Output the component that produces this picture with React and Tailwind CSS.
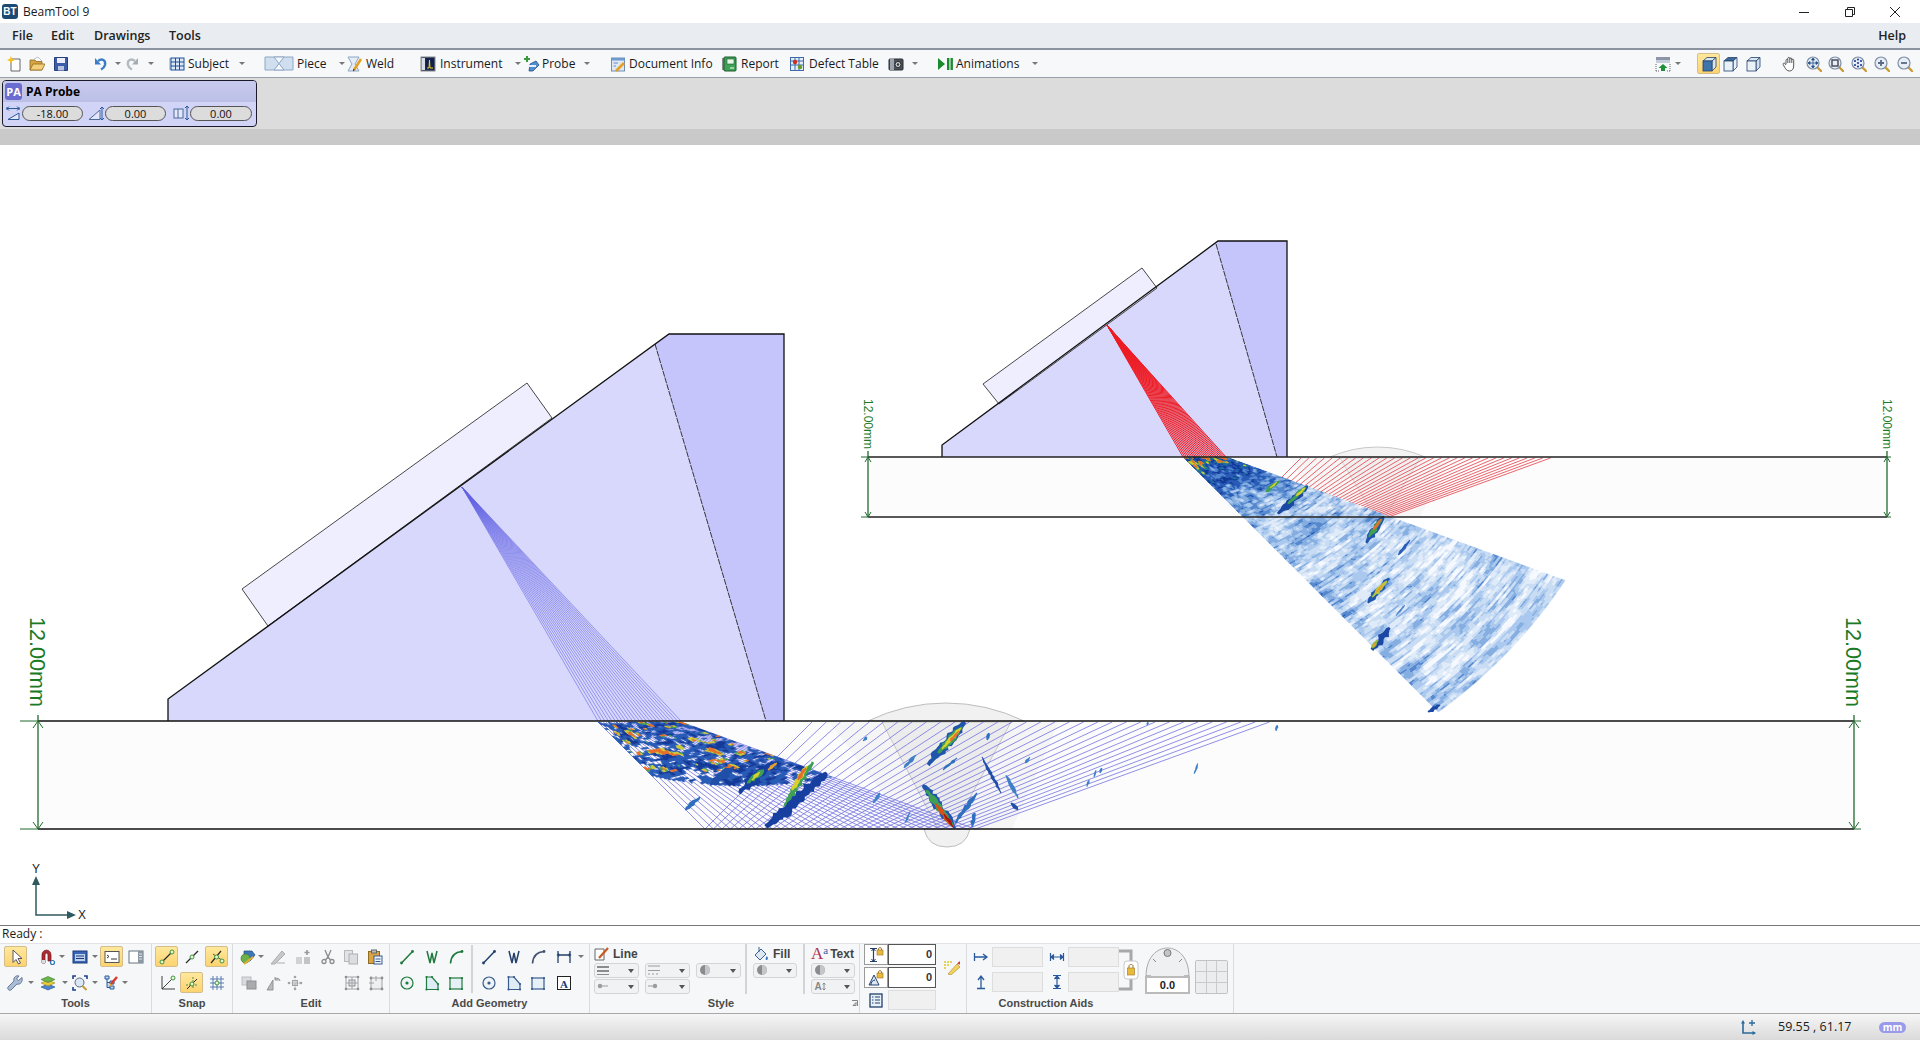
import React from 'react';

// ---------- small seeded noise for the ultrasonic scan pictures ----------
function mulberry(a) {
  return () => {
    a |= 0;
    a = (a + 0x6d2b79f5) | 0;
    let t = Math.imul(a ^ (a >>> 15), 1 | a);
    t = (t + Math.imul(t ^ (t >>> 7), 61 | t)) ^ t;
    return ((t ^ (t >>> 14)) >>> 0) / 4294967296;
  };
}

function makeNoise(seed) {
  const r = mulberry(seed);
  const g = Array.from({ length: 65536 }, () => r());
  const at = (x, y) => g[((x & 255) << 8) | (y & 255)];
  const s = (v) => v * v * (3 - 2 * v);
  return (x, y) => {
    const x0 = Math.floor(x);
    const y0 = Math.floor(y);
    const fx = s(x - x0);
    const fy = s(y - y0);
    const a = at(x0, y0) * (1 - fx) + at(x0 + 1, y0) * fx;
    const b = at(x0, y0 + 1) * (1 - fx) + at(x0 + 1, y0 + 1) * fx;
    return a * (1 - fy) + b * fy;
  };
}

const LEVELS = [
  [0.06, '#f6f9fe'], [0.12, '#e0ebf9'], [0.18, '#c8dcf4'], [0.25, '#abc9ee'],
  [0.33, '#86aee2'], [0.42, '#5589cf'], [0.55, '#2a5cb6'], [0.72, '#143a9a'],
  [0.8, '#1d6fa0'], [0.88, '#3f9f55'], [0.95, '#cfcb34'], [9, '#e8702a'],
];
const colorOf = (a) => LEVELS.find((l) => a < l[0])[1];

// polar cells of a sector, merged into one path per colour
function sector({ e0, e1, y0, rMax, beams, stepR, amp, clipY }) {
  const out = {};
  const pt = (r, t) => {
    const th = (Math.PI / 180) * (45 + 25 * t);
    return [e0 + (e1 - e0) * t + r * Math.sin(th), y0 + r * Math.cos(th)];
  };
  for (let j = 0; j < beams; j++) {
    const t = j / beams;
    const t2 = (j + 1) / beams;
    const max = rMax(t);
    for (let r = 0; r < max; r += stepR) {
      const a = amp(r, t);
      if (a === null) continue;
      const [p1, p2, p3, p4] = [pt(r, t), pt(r + stepR, t), pt(r + stepR, t2), pt(r, t2)];
      if (clipY && p2[1] > clipY) continue;
      const c = colorOf(a);
      out[c] = (out[c] || '') +
        `M${p1[0].toFixed(1)} ${p1[1].toFixed(1)}L${p2[0].toFixed(1)} ${p2[1].toFixed(1)}L${p3[0].toFixed(1)} ${p3[1].toFixed(1)}L${p4[0].toFixed(1)} ${p4[1].toFixed(1)}Z`;
    }
  }
  return Object.entries(out);
}

const nA = makeNoise(11);
const nB = makeNoise(23);
const nC = makeNoise(37);

const smallScan = sector({
  e0: 1183, e1: 1226, y0: 457, beams: 140, stepR: 2.2, rMax: () => 360,
  amp: (r, t) => {
    const n = nA(r / 2.4, t * 9) * 0.5 + nB(r / 9, t * 4) * 0.35 + nC(r / 1.4, t * 28) * 0.3;
    let a = Math.max(0, (n - 0.3) * 0.56);
    a += Math.exp(-r / 50) * 0.95 * (0.35 + 0.75 * nC(r / 4, t * 16));
    if (t < 0.1) a += 0.1 * nB(r / 5, 3);
    return Math.min(a, 0.97);
  },
});

const bigScan = sector({
  e0: 598, e1: 681, y0: 722, beams: 84, stepR: 2.2, clipY: 829,
  rMax: (t) => 76 + 84 * t,
  amp: (r, t) => {
    const n = nA(r / 3 + 50, t * 24) * 0.75 + nB(r / 9 + 7, t * 6) * 0.4;
    if (n < 0.48) return null;
    const hot = nC(r / 5, t * 14);
    return 0.46 + (n - 0.48) * 0.35 + (hot > 0.74 && r < 70 + 40 * t ? 0.38 : 0) + (hot > 0.84 ? 0.12 : 0);
  },
});

// jagged blotch along a line, layered dark to hot
const rnd = mulberry(77);
function blotch(x1, y1, x2, y2, w) {
  const L = Math.hypot(x2 - x1, y2 - y1) || 1;
  const nx = -(y2 - y1) / L;
  const ny = (x2 - x1) / L;
  const n = Math.max(3, Math.round(L / 2.5));
  const a = [];
  const b = [];
  for (let i = 0; i <= n; i++) {
    const t = i / n;
    const taper = Math.min(1, 0.35 + 2.4 * Math.min(t, 1 - t));
    const wa = (w / 2) * taper * (0.5 + rnd());
    const wb = (w / 2) * taper * (0.5 + rnd());
    const x = x1 + (x2 - x1) * t;
    const y = y1 + (y2 - y1) * t;
    a.push(`${(x + nx * wa).toFixed(1)} ${(y + ny * wa).toFixed(1)}`);
    b.unshift(`${(x - nx * wb).toFixed(1)} ${(y - ny * wb).toFixed(1)}`);
  }
  return 'M' + a.concat(b).join('L') + 'Z';
}

const BLOTCHES = [
  // big plate
  [827, 773, 766, 827, 11, '#173f9f'], [773, 762, 739, 793, 9, '#173f9f'], [734, 767, 710, 785, 8, '#1f4fa8'],
  [700, 797, 685, 810, 4, '#2f6fc0'], [965, 722, 928, 765, 9, '#1f55ab'], [957, 758, 943, 770, 3, '#2f6fc0'],
  [923, 785, 955, 828, 8, '#1f55ab'], [977, 793, 955, 823, 4, '#2f6fc0'], [982, 757, 1001, 793, 3, '#1f4fa8'],
  [1006, 775, 1018, 798, 3, '#3f7fc8'], [1011, 803, 1018, 810, 3, '#1f4fa8'], [975, 813, 972, 827, 5, '#2f6fc0'],
  [867, 737, 863, 741, 3, '#3f7fc8'], [880, 793, 873, 803, 3, '#3f7fc8'], [910, 812, 905, 823, 2, '#3f7fc8'],
  [1030, 757, 1025, 763, 3, '#3f7fc8'], [989, 733, 987, 740, 3, '#2f6fc0'], [916, 755, 904, 768, 3, '#3f7fc8'],
  [1277, 725, 1276, 731, 3, '#3f7fc8'], [1198, 763, 1194, 774, 2, '#3f7fc8'], [1102, 768, 1100, 773, 2, '#3f7fc8'],
  [1096, 770, 1094, 777, 2, '#3f7fc8'], [1089, 780, 1087, 787, 2, '#3f7fc8'], [1148, 722, 1147, 725, 2, '#3f7fc8'],
  [813, 762, 784, 806, 6, '#3f9f55'], [807, 766, 792, 790, 5, '#d8cf30'], [806, 768, 798, 780, 3.5, '#e2702a'],
  [764, 770, 747, 783, 5, '#3f9f55'], [760, 772, 752, 780, 3, '#d8cf30'],
  [777, 763, 768, 770, 3, '#e8a030'],
  [962, 727, 938, 753, 6, '#3f9f55'], [961, 728, 942, 749, 4, '#d8cf30'], [959, 731, 950, 741, 2.5, '#e8702a'],
  [926, 790, 953, 826, 6, '#3f9f55'], [935, 803, 953, 827, 4, '#d8501c'], [944, 814, 953, 827, 2.5, '#a01810'],
  // small plate
  [1384, 516, 1366, 543, 6, '#1f55ab'], [1382, 519, 1369, 537, 4, '#3f9f55'], [1381, 519, 1373, 530, 2.5, '#e2702a'],
  [1389, 578, 1368, 603, 6, '#1f55ab'], [1387, 581, 1372, 597, 4, '#b8c83a'], [1383, 585, 1376, 592, 2.5, '#e8a030'],
  [1390, 628, 1372, 650, 7, '#1a48a4'], [1378, 640, 1372, 648, 4, '#8fb83a'], [1375, 643, 1373, 647, 2, '#e8a030'],
  [1308, 486, 1278, 514, 6, '#1a48a4'], [1306, 487, 1288, 504, 4, '#3f9f55'], [1305, 488, 1296, 496, 2.5, '#d8cf30'],
  [1279, 481, 1266, 492, 4, '#3f9f55'], [1277, 482, 1270, 488, 2, '#d8cf30'],
  [1410, 540, 1398, 555, 3, '#2a5cb6'], [1405, 605, 1396, 616, 2, '#5589cf'], [1440, 705, 1428, 712, 4, '#1a48a4'],
].map(([x1, y1, x2, y2, w, c]) => ({ d: blotch(x1, y1, x2, y2, w), c }));

// incident leg plus the skip leg; tangent steps evenly so the spacing stays even
function beamLines(e0, e1, top, depth, first, n = 32) {
  let d = '';
  for (let i = 0; i <= n; i++) {
    const t = i / n;
    const k = 1 + 1.75 * t;
    const e = e0 + (e1 - e0) * t;
    const bx = (e + k * depth).toFixed(1);
    d += first ? `M${e.toFixed(1)} ${top}L${bx} ${top + depth}` : `M${bx} ${top + depth}`;
    d += `L${(e + 2 * k * depth).toFixed(1)} ${top}`;
  }
  return d;
}

function fanLines(ax, ay, e0, e1, y, n) {
  let d = '';
  for (let i = 0; i <= n; i++) d += `M${ax} ${ay}L${(e0 + ((e1 - e0) * i) / n).toFixed(1)} ${y}`;
  return d;
}

// ---------- canvas ----------
function Dim({ x, top, bottom, tx, ty, size, tickFrom, tickTo }) {
  const a = size > 15 ? 5 : 3;
  return (
    <g stroke="#1f6b2d" fill="none" strokeWidth="1">
      <path d={`M${tickFrom} ${top}H${tickTo}M${tickFrom} ${bottom}H${tickTo}`} />
      <path d={`M${x} ${top - 6}V${bottom}`} strokeWidth="1.3" />
      <path d={`M${x - a} ${top + a + 2}L${x} ${top}L${x + a} ${top + a + 2}M${x - a} ${bottom - a - 2}L${x} ${bottom}L${x + a} ${bottom - a - 2}`} />
      <text
        x={tx}
        y={ty}
        stroke="none"
        fill="#1b7a25"
        fontFamily="'Liberation Sans', sans-serif"
        fontSize={size}
        textAnchor="middle"
        dominantBaseline="central"
        transform={`rotate(90 ${tx} ${ty})`}
      >
        12.00mm
      </text>
    </g>
  );
}

function Canvas() {
  return (
    <div className="h-[780px] bg-white flex-none">
      <svg className="block w-full h-full" viewBox="0 145 1920 780">
        {/* big plate */}
        <rect x="38" y="721" width="1816" height="108" fill="#fcfcfc" />
        <path d="M829 722H1059L1012 829H910Z" fill="#f5f5f5" />
        <path d="M868 721A178 178 0 0 1 1024 721Z" fill="#f1f1f1" stroke="#bdbdbd" />
        <path d="M924 829H970Q966 847 947 847Q928 847 924 829Z" fill="#f1f1f1" stroke="#bdbdbd" />
        <path d="M882 722H1011L953 829H938Z" fill="#ececec" stroke="#bdbdbd" strokeWidth=".8" />
        <path d={beamLines(598, 681, 722, 107, true)} fill="none" stroke="#7272e2" strokeWidth=".8" />
        <path d="M168 721V699L669 334H784V721Z" fill="#d8d8fc" />
        <path d="M655 344L669 334H784V721H766Z" fill="#c5c5fb" />
        <path d="M242 589L527 383L552 418L268 626Z" fill="#eeeeff" stroke="#333" strokeWidth=".9" />
        <path d="M655 344L766 721" stroke="#222" strokeWidth=".9" fill="none" strokeDasharray="6 1" />
        <path d={fanLines(462, 487, 598, 681, 721, 24)} stroke="#6464e4" strokeWidth=".6" fill="none" />
        <path d="M168 721V699L669 334H784V721" fill="none" stroke="#111" strokeWidth="1.3" />
        {bigScan.map(([c, d]) => (
          <path key={c} d={d} fill={c} stroke={c} strokeWidth=".3" />
        ))}
        {/* small plate */}
        <rect x="868" y="457" width="1019" height="60" fill="#fcfcfc" />
        <path d="M1290 458H1450L1420 517H1325Z" fill="#f6f6f6" />
        <path d="M1330 457A118 118 0 0 1 1425 457Z" fill="#f3f3f3" stroke="#c8c8c8" />
        <path d="M1340 458H1420L1385 517H1375Z" fill="#f0f0f0" stroke="#cfcfcf" strokeWidth=".7" />
        <path d={beamLines(1183, 1226, 458, 59, false)} fill="none" stroke="#e8545c" strokeWidth=".9" />
        <path d="M942 457V445L1218 241H1287V457Z" fill="#d8d8fc" />
        <path d="M1216 244L1218 241H1287V457H1277Z" fill="#c5c5fb" />
        <path d="M983 384L1142 268L1157 288L999 404Z" fill="#eeeeff" stroke="#333" strokeWidth=".9" />
        <path d="M1216 244L1277 457" stroke="#222" strokeWidth=".9" fill="none" strokeDasharray="6 1" />
        <path d={fanLines(1107, 325, 1183, 1226, 457, 24)} stroke="#ee1c24" strokeWidth="1" fill="none" />
        <path d="M942 457V445L1218 241H1287V457" fill="none" stroke="#111" strokeWidth="1.3" />
        {smallScan.map(([c, d]) => (
          <path key={c} d={d} fill={c} stroke={c} strokeWidth=".3" />
        ))}
        {BLOTCHES.map((b, i) => (
          <path key={i} d={b.d} fill={b.c} />
        ))}
        {/* plate outlines */}
        <path d="M38 721H1854M38 829H1854" stroke="#111" strokeWidth="1.4" />
        <path d="M868 457H1887M868 517H1887" stroke="#222" strokeWidth="1.6" />
        <Dim x={38} top={721} bottom={829} tx={37} ty={662} size={21.6} tickFrom={20} tickTo={38} />
        <Dim x={1854} top={721} bottom={829} tx={1853} ty={662} size={21.6} tickFrom={1854} tickTo={1861} />
        <Dim x={868} top={457} bottom={517} tx={868} ty={424} size={12} tickFrom={861} tickTo={868} />
        <Dim x={1887} top={457} bottom={517} tx={1887} ty={424} size={12} tickFrom={1887} tickTo={1891} />
        {/* axes */}
        <path d="M36 882V915H68" fill="none" stroke="#2f5a5f" strokeWidth="1.5" />
        <path d="M36 876L40 885H32ZM76 915L67 919V911Z" fill="#2f5a5f" />
        <text x="36" y="873" fontSize="12" textAnchor="middle" fontFamily="'Liberation Sans', sans-serif" fill="#222">Y</text>
        <text x="82" y="919" fontSize="12" textAnchor="middle" fontFamily="'Liberation Sans', sans-serif" fill="#222">X</text>
      </svg>
    </div>
  );
}

// ---------- icons ----------
const G = '#1f7a3e';
const N = '#23406b';
const dots = (pts, c, r = 1.4) => pts.map(([x, y], i) => <circle key={i} cx={x} cy={y} r={r} fill={c} />);
const mag = (inner) => (
  <>
    <path d="M10.5 10.5L15 15" stroke="#c89a30" strokeWidth="2.4" strokeLinecap="round" />
    <circle cx="7" cy="7" r="6" fill="#e8eef6" stroke="#7f8ea4" strokeWidth="1.2" />
    {inner}
  </>
);
const ln = (c) => (
  <>
    <path d="M2.5 14L13.5 2.5" stroke={c} strokeWidth="1.5" />
    {dots([[2.5, 14], [13.5, 2.5]], c)}
  </>
);
const zig = (c) => <path d="M3 2L6 14L8 4L10 14L13 2" stroke={c} strokeWidth="1.5" fill="none" />;
const arc = (c) => (
  <>
    <path d="M2.5 14.5C3 7 7 3 14 2.5" stroke={c} strokeWidth="1.6" fill="none" />
    {dots([[14, 2.5]], c)}
  </>
);
const circ = (c) => (
  <>
    <circle cx="8" cy="8" r="6" fill="#eef3f5" stroke={c} strokeWidth="1.2" />
    <circle cx="8" cy="8" r="1.6" fill={c} />
  </>
);
const poly = (c) => (
  <>
    <path d="M2.5 2V14.5H14V9L8 2Z" fill="#dfecf6" stroke={c} strokeWidth="1.2" />
    {dots([[2.5, 2], [2.5, 14.5], [14, 14.5], [14, 9], [8, 2]], c, 1.1)}
  </>
);
const rct = (c) => (
  <>
    <rect x="2" y="3" width="12" height="11" fill="#e6f0f7" stroke={c} strokeWidth="1.2" />
    {dots([[2, 3], [14, 3], [2, 14], [14, 14]], c, 1.1)}
  </>
);
const snapDot = (x, y) => <circle cx={x} cy={y} r="2" fill="#e9f7c8" stroke="#2c8a3c" strokeWidth=".9" />;
const cube = (front, top, side) => (
  <>
    <path d="M2 5L6 1.5H15L11 5Z" fill={top} stroke={N} strokeWidth=".8" />
    <path d="M11 5L15 1.5V11L11 15Z" fill={side} stroke={N} strokeWidth=".8" />
    <rect x="2" y="5" width="9" height="10" fill={front} stroke={N} strokeWidth=".8" />
  </>
);

const ICONS = {
  new: <><path d="M5 3H13V15H4V5Z" fill="#fff" stroke="#555" strokeWidth=".9" /><path d="M4 0L5.2 2.8L8 4L5.2 5.2L4 8L2.8 5.2L0 4L2.8 2.8Z" fill="#f6c11c" /></>,
  open: <><path d="M1 4H6L7 5.5H13V14H1Z" fill="#d9a441" stroke="#8f6a20" strokeWidth=".8" /><path d="M5 3L9 1L13 5" fill="#fff" stroke="#999" strokeWidth=".6" /><path d="M1 14L4 8H16L13 14Z" fill="#f3cf7a" stroke="#8f6a20" strokeWidth=".8" /></>,
  save: <><path d="M1.5 1.5H14.5V14.5H1.5Z" fill="#3c5da8" stroke="#26407e" /><rect x="4" y="2" width="8" height="5" fill="#eef" /><rect x="5" y="10" width="6" height="4.5" fill="#b8c4e0" /></>,
  undo: <><path d="M5 5C9 2 13 4 12 9C11.5 11 10 12.5 8 13.5" stroke="#3a7cc6" strokeWidth="2.4" fill="none" /><path d="M2 2V8.5H8Z" fill="#3a7cc6" /></>,
  redo: <><path d="M11 5C7 2 3 4 4 9C4.5 11 6 12.5 8 13.5" stroke="#b4b9bd" strokeWidth="2.4" fill="none" /><path d="M14 2V8.5H8Z" fill="#a6abb0" /></>,
  subject: <><rect x="2" y="2" width="13" height="12" fill="#dbe8f8" stroke="#1e4f95" /><path d="M6.5 2V14M10.5 2V14M2 6H15M2 10H15" stroke="#1e4f95" /><path d="M1 2.5V14" stroke="#1e4f95" strokeDasharray="1 1" /></>,
  piece: <><path d="M1 1H29V14H1Z" fill="#cfdff0" stroke="#8ea6c4" /><path d="M10 1L15 7.5L10 14H20L15 7.5L20 1Z" fill="#f4f7fb" stroke="#8ea6c4" /></>,
  weld: <><path d="M1 1H12L8 8L12 15H1L5 8Z" fill="#e4ecf6" stroke="#8ea6c4" /><path d="M7 14L14 3" stroke="#e4a020" strokeWidth="2.6" /><path d="M6.5 15L7 13" stroke="#333" strokeWidth="1.2" /></>,
  inst: <><rect x="1" y="1" width="14" height="14" fill="#1a2a55" stroke="#888" /><rect x="1.5" y="2" width="3.5" height="12" fill="#d8dde5" /><rect x="6" y="2.5" width="8" height="10.5" fill="#10204c" /><path d="M7 12L9 12L9.5 4L10 12H13" stroke="#f2d230" fill="none" /></>,
  probe: <><path d="M3 0V6M0 3H6" stroke="#3c9a3c" strokeWidth="2" /><path d="M6 8L12 5L15 9L9 15H5Z" fill="#4f8fd0" stroke="#254f86" strokeWidth=".8" /><rect x="4" y="9" width="8" height="2" fill="#eef" /></>,
  doc: <><rect x="1.5" y="2" width="13" height="13" fill="#dfe9f6" stroke="#6f8cb3" /><rect x="1.5" y="2" width="13" height="2.5" fill="#6f9ad0" /><path d="M3.5 7H8M3.5 10H6" stroke="#6f8cb3" /><path d="M6 15L14 7" stroke="#e4a020" strokeWidth="2.6" /></>,
  report: <><rect x="2" y="1" width="12" height="14" rx="1" fill="#3fa256" stroke="#1a5c2c" /><rect x="5" y="3" width="7" height="5" fill="#e8f6ea" stroke="#1a5c2c" strokeWidth=".6" /><path d="M8 12H12" stroke="#fff" /><path d="M1 2.5V14" stroke="#222" strokeDasharray="1 1" strokeWidth="2" /></>,
  defect: <><rect x="1.5" y="1.5" width="13" height="13" fill="#e4edf8" stroke="#3f6aa8" /><path d="M1.5 5H14.5M1.5 9H14.5M6 1.5V14.5M10 1.5V14.5" stroke="#3f6aa8" /><circle cx="6" cy="6" r="2.2" fill="#c8321c" /><circle cx="11" cy="11" r="2.2" fill="#6a9a2a" /></>,
  camera: <><rect x="1" y="3" width="14" height="11" rx="1" fill="#4a5058" stroke="#2a2e33" /><rect x="2" y="2" width="4" height="12" fill="#9da4ad" /><circle cx="10" cy="8.5" r="3" fill="#d8dde2" stroke="#222" /><circle cx="10" cy="8.5" r="1.3" fill="#333" /></>,
  anim: <><path d="M1 2L8 8L1 14Z" fill="#1a8a2e" /><rect x="10" y="2" width="2.4" height="12" fill="#1a8a2e" /><rect x="13.5" y="2" width="2.4" height="12" fill="#1a8a2e" /></>,
  layout: <><rect x="1" y="1" width="14" height="3" fill="#8c96a8" /><rect x="1" y="4" width="14" height="3" fill="#c6cedb" /><path d="M8 8L12.5 12H10V15H6V12H3.5Z" fill="#1f8f3a" /><path d="M1 8V15M15 8V15M1 15H4M12 15H15" stroke="#666" strokeDasharray="1 1" /></>,
  cube1: cube('#3f74ad', '#d7e6f3', '#d7e6f3'),
  cube2: cube('#e8f1f8', '#3f6a9a', '#e8f1f8'),
  cube3: cube('#eaf2f8', '#dbe8f2', '#cfe0ee'),
  hand: <path d="M4 8V4.5C4 3 5.7 3 5.8 4.5V7M5.8 4V2.5C5.8 1 7.7 1 7.8 2.5V7M7.8 3C7.8 1.6 9.8 1.6 9.8 3V7M9.8 4C9.8 2.8 11.7 2.8 11.7 4.2V10C11.7 13 10 15 7.5 15C5 15 3.8 13.2 2.8 11.5L1.2 8.5C.7 7.3 2.2 6.5 3 7.6L4 9" fill="#fff" stroke="#444" strokeWidth=".9" />,
  panzoom: mag(<path d="M7 2.5V11.5M2.5 7H11.5M7 2L5.5 4H8.5ZM7 12L5.5 10H8.5ZM2 7L4 5.5V8.5ZM12 7L10 5.5V8.5Z" stroke="#23508c" fill="#23508c" strokeWidth=".8" />),
  zoombox: mag(<rect x="4" y="4" width="6" height="6" fill="none" stroke="#445" strokeWidth="1.4" />),
  zoomdots: mag(dots([[4, 5], [7, 3.5], [10, 5], [4, 9], [10, 9], [7, 10.5], [7, 7]], '#1e3f9c', 1.1)),
  zoomin: mag(<path d="M7 4V10M4 7H10" stroke="#5a6a86" strokeWidth="1.8" />),
  zoomout: mag(<path d="M4 7H10" stroke="#5a6a86" strokeWidth="1.8" />),
  cursor: <path d="M5 1V13.5L8 10.5L10.5 15L12.5 14L10 9.5H14Z" fill="#fff" stroke="#556" strokeWidth="1" />,
  magnet: <><path d="M2 14V6C2 -.5 11 -.5 11 6V12H8V6C8 3.5 5 3.5 5 6V14Z" fill="#b02a30" stroke="#6e1418" strokeWidth=".7" /><rect x="2" y="11" width="3" height="3" fill="#ddd" /><circle cx="12.5" cy="13.5" r="2" fill="#fff" stroke="#2a70b8" strokeWidth="1.2" /></>,
  window: <><rect x="1" y="2" width="14" height="12" fill="#3a64b4" stroke="#1d3a78" /><rect x="3" y="5" width="10" height="7" fill="#bcd0ee" /><path d="M4 7H12M4 9.5H12" stroke="#1d3a78" /></>,
  console: <><rect x="1" y="2.5" width="14" height="11" fill="#fff" stroke="#555" /><path d="M3 6L5 7.5L3 9M7 10H13" stroke="#333" fill="none" /></>,
  panel: <><rect x="1" y="2" width="14" height="12" fill="#fff" stroke="#67727f" /><rect x="10" y="2" width="5" height="12" fill="#8c97a3" /><path d="M11 5H14M11 7.5H14M11 10H14" stroke="#dfe4e8" /></>,
  wrench: <path d="M15 2.5L11.5 5.5L9.5 4L12 1C8.5 0 6 3 7 6L1 12C0 14 2 16 4 15L10 9C13 10 16 7 15 2.5Z" fill="#a9bdd6" stroke="#5b6f8e" strokeWidth=".9" />,
  layers: <><path d="M1 12L8 9L15 12L8 15Z" fill="#4c82cf" stroke="#2b548f" strokeWidth=".6" /><path d="M1 8L8 5L15 8L8 11Z" fill="#e8c838" stroke="#9a8a20" strokeWidth=".6" /><path d="M1 4.5L8 1.5L15 4.5L8 7.5Z" fill="#6cb44c" stroke="#3e7a2a" strokeWidth=".6" /></>,
  zoomrect: <><path d="M1 4V1H4M12 1H15V4M1 12V15H4" stroke="#1c3f8e" strokeWidth="1.6" fill="none" /><circle cx="7.5" cy="7.5" r="4.5" fill="#dbe8f3" stroke="#5c6a80" /><path d="M10.5 11L14.5 15" stroke="#c89a30" strokeWidth="2" /></>,
  listedit: <><path d="M2 1H6V4H2ZM7 6H11V9H7ZM7 11H11V14H7ZM4 4V12.5H7M4 7.5H7" stroke="#2a5a9c" fill="#bcd3ee" /><path d="M8 9L14 2" stroke="#d83a2a" strokeWidth="2.4" /><path d="M7 11L8 9" stroke="#e4a020" strokeWidth="2" /></>,
  s1: <><path d="M3 13L13 3" stroke="#2b2b2b" strokeWidth="1.2" />{snapDot(3, 13)}{snapDot(13, 3)}</>,
  s2: <><path d="M2 14L14 2" stroke="#2b2b2b" strokeWidth="1.2" />{snapDot(8, 8)}</>,
  s3: <><path d="M2 14L12 2" stroke="#2b2b2b" strokeWidth="1.2" /><path d="M4 5L14 12" stroke="#2b2b2b" strokeWidth=".8" />{snapDot(7.5, 8)}{snapDot(13, 12)}</>,
  s4: <><path d="M2 1V14H15M2 14L12 4" stroke="#2b2b2b" strokeWidth=".9" fill="none" />{snapDot(13, 3)}</>,
  s5: <><path d="M2 10H14M9 2V14" stroke="#3f8a3c" strokeWidth=".9" strokeDasharray="2 1" /><path d="M3 14L13 4" stroke="#2b2b2b" />{snapDot(8, 9)}</>,
  s6: <><path d="M4 1V15M8 1V15M12 1V15M1 4H15M1 8H15M1 12H15" stroke="#4a6ea8" strokeWidth=".9" />{snapDot(8, 8)}</>,
  e1: <><path d="M4 2H12L15 6L10 12H4Z" fill="#3d76b8" stroke="#274f80" strokeWidth=".7" /><circle cx="5.5" cy="9.5" r="4.5" fill="#6cb04a" stroke="#3c7a28" strokeWidth=".7" /><path d="M4 15L13 8" stroke="#e0b030" strokeWidth="2" /></>,
  e2: <path d="M1 15L12 2L15 5L5 15ZM7 14H15" fill="#c6c8cc" stroke="#a5a8ac" strokeWidth=".9" />,
  e3: <><rect x="1" y="8" width="6" height="7" fill="#d0d2d6" /><rect x="9" y="8" width="6" height="7" fill="#c2c4c8" /><path d="M12 1V6M9.5 3.5H14.5" stroke="#999" strokeWidth="1.6" /></>,
  e4: <path d="M5 1L8 8L11 1M4 14.5A2 2 0 1 0 4 10.5A2 2 0 1 0 4 14.5ZM12 14.5A2 2 0 1 0 12 10.5A2 2 0 1 0 12 14.5ZM8 8L5.5 11M8 8L10.5 11" stroke="#8a8c90" strokeWidth="1.3" fill="none" />,
  e5: <><rect x="1.5" y="1.5" width="8" height="11" fill="#e2e3e6" stroke="#b7b9bd" /><rect x="6" y="5" width="8.5" height="10" fill="#dcdde0" stroke="#aeb0b4" /></>,
  e6: <><rect x="1.5" y="2.5" width="11" height="12" fill="#d9a441" stroke="#8f6a20" /><rect x="4.5" y="1" width="5" height="3" fill="#bbb" stroke="#666" /><rect x="7" y="7" width="8" height="8" fill="#f0f4fa" stroke="#3a5a8c" /><path d="M8.5 10H13.5M8.5 12.5H13.5" stroke="#3a5a8c" /></>,
  e7: <><rect x="1" y="2" width="9" height="8" fill="#dadbde" stroke="#bcbec2" /><rect x="6" y="6" width="9" height="8" fill="#a9abaf" stroke="#8d8f93" /></>,
  e8: <path d="M1 15L7 5V15ZM9 4A3 3 0 0 1 14 6M9 2V5H12" fill="#b8babe" stroke="#8a8c90" strokeWidth=".9" />,
  e9: <><rect x="5.5" y="5.5" width="5" height="5" fill="#d8d9dc" stroke="#a0a2a6" /><path d="M8 1V15M1 8H15" stroke="#b0b2b6" strokeDasharray="2 1.5" />{dots([[8, 2], [8, 14], [2, 8], [14, 8]], '#a2a4a8', 1.3)}</>,
  e10: <><rect x="2" y="2" width="12" height="12" fill="none" stroke="#a0a2a6" /><rect x="5" y="5" width="6" height="6" fill="#e4e5e8" stroke="#8d8f93" /><path d="M8 2V14M2 8H14" stroke="#a0a2a6" />{dots([[2, 2], [14, 2], [2, 14], [14, 14]], '#8d8f93', 1.3)}</>,
  e11: <><rect x="3" y="3" width="11" height="11" fill="#eeeff1" stroke="#a0a2a6" /><path d="M8 1V6M1 8H6" stroke="#a0a2a6" />{dots([[3, 3], [14, 3], [3, 14], [14, 14]], '#8d8f93', 1.4)}</>,
  g1: ln(G), g2: zig(G), g3: arc(G), g4: circ(G), g5: poly(G), g6: rct(G),
  d1: ln(N), d2: zig(N), d3: arc('#42536e'), d4: <><path d="M2 2V14M14 2V14M2 6H14M3 4.5L1.5 6L3 7.5M13 4.5L14.5 6L13 7.5" stroke={N} strokeWidth="1.3" fill="none" /></>,
  d5: circ('#3a5a8c'), d6: poly('#3a5a8c'), d7: rct('#3a5a8c'),
  d8: <><rect x="1.5" y="1.5" width="13" height="13" fill="#fff" stroke="#222" /><text x="8" y="12.5" fontSize="11" fontWeight="700" fontFamily="'Liberation Serif', serif" textAnchor="middle" fill="#1d3a78">A</text></>,
  pencilLine: <><path d="M1 3H10V14H1Z" fill="#fff" stroke="#666" /><path d="M5 12L14 2" stroke="#c65a20" strokeWidth="2.2" /></>,
  bucket: <><path d="M2 9L8 3L13 8L7 14Z" fill="#dde8f4" stroke="#3b5f8e" /><path d="M6 1V6" stroke="#3b5f8e" /><path d="M14 10C15.5 12 15 14 13.5 14C12.5 14 12 12 14 10Z" fill="#3b78c4" /></>,
  ball: <><circle cx="7" cy="7" r="5" fill="#8a8c90" /><path d="M7 2A5 5 0 0 1 7 12Z" fill="#c4c6ca" /></>,
  weightL: <path d="M1 3H13V5H1ZM1 7H13V9H1ZM1 11H13V12H1Z" fill="#8a8c90" />,
  dash: <path d="M1 3H13M1 7.5H13M1 11H3M5 11H7M9 11H11" stroke="#9a9ca0" />,
  startL: <><circle cx="4" cy="7" r="2.2" fill="#9a9ca0" /><path d="M6 7H12" stroke="#9a9ca0" /></>,
  endL: <><circle cx="8" cy="7" r="2.2" fill="#9a9ca0" /><path d="M1 7H6" stroke="#9a9ca0" /></>,
  sizeA: <><text x="5" y="11" fontSize="10" fontFamily="'Liberation Sans', sans-serif" fill="#888" textAnchor="middle">A</text><path d="M11 4V11M9.5 5.5L11 4L12.5 5.5M9.5 9.5L11 11L12.5 9.5" stroke="#888" fill="none" /></>,
  lockI: <><path d="M2 1.5H9M2 14.5H9M5.5 1.5V14.5" stroke={N} strokeWidth="1.2" /><path d="M3.5 4L5.5 1.5L7.5 4M3.5 12L5.5 14.5L7.5 12" stroke={N} fill="none" /><rect x="9" y="3" width="6" height="5" fill="#e9b93c" stroke="#9a7420" strokeWidth=".6" /><path d="M10.5 3V1.6C10.5 .4 13.5 .4 13.5 1.6V3" stroke="#9a7420" fill="none" /></>,
  lockA: <><path d="M1 15L6 5L11 15ZM3 15A5 5 0 0 1 7 10" stroke={N} fill="#dde8f4" strokeWidth="1" /><rect x="9" y="3" width="6" height="5" fill="#e9b93c" stroke="#9a7420" strokeWidth=".6" /><path d="M10.5 3V1.6C10.5 .4 13.5 .4 13.5 1.6V3" stroke="#9a7420" fill="none" /></>,
  listBox: <><rect x="2" y="2" width="12" height="13" fill="#e8f0f8" stroke={N} strokeWidth="1.3" /><path d="M4 5H5.5M7 5H12M4 8H5.5M7 8H12M4 11H5.5M7 11H12" stroke={N} /></>,
  pencil: <><path d="M4 15L13 5L16 8L7 16Z" fill="#f2d35c" stroke="#a8881e" strokeWidth=".6" /><path d="M13 5L15 2.5C16 2 17 4 16 5.5Z" fill="#d63a30" /><g fill="#e6d45a">{[[0, 2], [3, 2], [6, 2], [0, 5], [0, 8], [3, 5]].map(([x, y], i) => <rect key={i} x={x} y={y} width="2" height="2" />)}</g></>,
  arrH: <path d="M1.5 4V12M1.5 8H14M10 5L14 8L10 11" stroke="#2a5a9c" strokeWidth="1.3" fill="none" />,
  arrHH: <path d="M1.5 4V12M14.5 4V12M2 8H14M5 5.5L2 8L5 10.5M11 5.5L14 8L11 10.5" stroke="#2a5a9c" strokeWidth="1.2" fill="#2a5a9c" />,
  arrV: <path d="M4 14.5H12M8 14.5V2M5 6L8 2L11 6" stroke="#2a5a9c" strokeWidth="1.3" fill="none" />,
  arrVV: <path d="M4 1.5H12M4 14.5H12M8 2V14M5.5 5L8 2L10.5 5M5.5 11L8 14L10.5 11" stroke="#2a5a9c" strokeWidth="1.2" fill="#2a5a9c" />,
  axes: <><path d="M3 4V14H15" stroke="#2a6a9c" strokeWidth="1.6" fill="none" /><path d="M3 1L5 4.5H1ZM16 14L12.5 16V12Z" fill="#2a6a9c" /><path d="M12 1V7M9 4H15" stroke="#2a6a9c" strokeWidth="1.3" /></>,
  pLen: <><path d="M1 2V5M13 2V5M1 3.5H13M3 1.5L1 3.5L3 5.5M11 1.5L13 3.5L11 5.5" stroke="#2a5a9c" fill="none" /><path d="M2 14.5H13V8Z" fill="#e4e6fa" stroke="#2a5a9c" /></>,
  pAng: <><path d="M1 14.5H12V5Z" fill="#e4e6fa" stroke="#4a6a9c" /><path d="M14 2V15M12 4L14 2L16 4M12 13L14 15L16 13" stroke="#2a5a9c" fill="none" /></>,
  pOff: <><rect x="1" y="4" width="9" height="9" fill="#e4e6fa" stroke="#4a6a9c" /><path d="M5 4V13" stroke="#4a6a9c" /><path d="M14 1V15M12 3L14 1L16 3M12 13L14 15L16 13" stroke="#2a5a9c" fill="none" /></>,
};

function Ic({ n }) {
  const w = n === 'piece' ? 30 : 16;
  const h = n === 'piece' ? 15 : 16;
  return (
    <svg width={w} height={h} viewBox={`0 0 ${w} ${h}`} className="block flex-none">
      {ICONS[n]}
    </svg>
  );
}

const Dd = () => <span className="block w-0 h-0 border-x-[3px] border-t-[3px] border-x-transparent border-t-[#777]" />;

// one strip of fixed-width cells: icon name, 'x!' for a highlighted icon, 'dd' for a caret, or a label
function Strip({ items }) {
  return items.map(([w, v], i) => {
    const active = v && v.endsWith('!');
    const name = active ? v.slice(0, -1) : v;
    return (
      <div key={i} className={`flex-none ${w} flex items-center`}>
        {active && (
          <span className="flex items-center justify-center w-[23px] h-[21px] rounded-[2px] border border-[#d5bd8a] bg-gradient-to-b from-[#ffe89c] to-[#fdd36f]">
            <Ic n={name} />
          </span>
        )}
        {!active && ICONS[name] && <Ic n={name} />}
        {!active && name === 'dd' && <Dd />}
        {!active && name && !ICONS[name] && name !== 'dd' && <span className="whitespace-nowrap">{name}</span>}
      </div>
    );
  });
}

const LEFT_BAR = [
  ['w-[22px]', 'new'], ['w-[24px]', 'open'], ['w-[40px]', 'save'], ['w-[22px]', 'undo'], ['w-[9px]', 'dd'],
  ['w-[24px]', 'redo'], ['w-[21px]', 'dd'], ['w-[19px]', 'subject'], ['w-[51px]', 'Subject'], ['w-[25px]', 'dd'],
  ['w-[33px]', 'piece'], ['w-[42px]', 'Piece'], ['w-[8px]', 'dd'], ['w-[19px]', 'weld'], ['w-[54px]', 'Weld'],
  ['w-[20px]', 'inst'], ['w-[75px]', 'Instrument'], ['w-[9px]', 'dd'], ['w-[18px]', 'probe'], ['w-[42px]', 'Probe'],
  ['w-[26px]', 'dd'], ['w-[19px]', 'doc'], ['w-[93px]', 'Document Info'], ['w-[19px]', 'report'], ['w-[48px]', 'Report'],
  ['w-[20px]', 'defect'], ['w-[79px]', 'Defect Table'], ['w-[24px]', 'camera'], ['w-[25px]', 'dd'], ['w-[19px]', 'anim'],
  ['w-[76px]', 'Animations'], ['w-[8px]', 'dd'],
];
const RIGHT_BAR = [
  ['w-[20px]', 'layout'], ['w-[22px]', 'dd'], ['w-[25px]', 'cube1!'], ['w-[23px]', 'cube2'], ['w-[37px]', 'cube3'],
  ['w-[24px]', 'hand'], ['w-[22px]', 'panzoom'], ['w-[23px]', 'zoombox'], ['w-[23px]', 'zoomdots'], ['w-[23px]', 'zoomin'], ['w-[23px]', 'zoomout'],
];

function Rows({ className, top, bottom }) {
  return (
    <div className={`flex flex-col gap-[5px] pt-[2px] ${className}`}>
      <div className="flex h-[21px]"><Strip items={top} /></div>
      <div className="flex h-[21px]"><Strip items={bottom} /></div>
    </div>
  );
}

const Label = ({ children, className = '' }) => (
  <div className={`h-[18px] text-center text-[11px] font-bold text-[#4a4a4a] leading-[18px] ${className}`}>{children}</div>
);

function Sel({ a, wide = true, className = '' }) {
  return (
    <div className={`flex items-center justify-between h-[15px] ${wide ? 'w-[45px]' : 'w-[44px]'} bg-[#f1f2f4] border border-[#d2d4d7] rounded-[3px] pl-[1px] pr-[4px] ${className}`}>
      <Ic n={a} />
      <span className="block w-0 h-0 border-x-[3px] border-t-[4px] border-x-transparent border-t-[#555]" />
    </div>
  );
}

const Field = ({ children, className = '' }) => (
  <div className={`h-[20px] border text-right pr-[3px] text-[11px] font-bold leading-[18px] ${className}`}>{children}</div>
);

const Pill = ({ value, className }) => (
  <div className={`h-[15px] rounded-full bg-[#dcdcdc] border border-[#555] text-center text-[11px] leading-[13px] text-[#111] ${className}`}>{value}</div>
);

function Ribbon() {
  return (
    <div className="flex h-[70px] flex-none bg-[#f5f7f9] border-t border-[#e1e3e6] text-[#333] font-['Liberation_Sans',sans-serif]">
      {/* Tools */}
      <div className="w-[152px] flex-none border-r border-[#d9dbde]">
        <Rows
          className="h-[50px] pl-[4px]"
          top={[['w-[36px]', 'cursor!'], ['w-[19px]', 'magnet'], ['w-[13px]', 'dd'], ['w-[20px]', 'window'], ['w-[8px]', 'dd'], ['w-[28px]', 'console!'], ['w-[16px]', 'panel']]}
          bottom={[['w-[3px]', ''], ['w-[21px]', 'wrench'], ['w-[12px]', 'dd'], ['w-[22px]', 'layers'], ['w-[10px]', 'dd'], ['w-[20px]', 'zoomrect'], ['w-[11px]', 'dd'], ['w-[19px]', 'listedit'], ['w-[8px]', 'dd']]}
        />
        <Label>Tools</Label>
      </div>
      {/* Snap */}
      <div className="w-[81px] flex-none border-r border-[#d9dbde]">
        <Rows
          className="h-[50px] pl-[3px]"
          top={[['w-[29px]', 's1!'], ['w-[21px]', 's2'], ['w-[23px]', 's3!']]}
          bottom={[['w-[5px]', ''], ['w-[20px]', 's4'], ['w-[29px]', 's5!'], ['w-[16px]', 's6']]}
        />
        <Label>Snap</Label>
      </div>
      {/* Edit */}
      <div className="w-[157px] flex-none border-r border-[#d9dbde]">
        <Rows
          className="h-[50px] pl-[7px]"
          top={[['w-[18px]', 'e1'], ['w-[12px]', 'dd'], ['w-[25px]', 'e2'], ['w-[25px]', 'e3'], ['w-[23px]', 'e4'], ['w-[24px]', 'e5'], ['w-[16px]', 'e6']]}
          bottom={[['w-[1px]', ''], ['w-[25px]', 'e7'], ['w-[21px]', 'e8'], ['w-[57px]', 'e9'], ['w-[24px]', 'e10'], ['w-[16px]', 'e11']]}
        />
        <Label>Edit</Label>
      </div>
      {/* Add Geometry */}
      <div className="w-[200px] flex-none border-r border-[#d9dbde]">
        <div className="flex h-[50px]">
          <Rows
            className="w-[83px] pl-[9px] border-r-2 border-[#d3d4d6] mt-[1px] mb-[1px] !pt-[1px]"
            top={[['w-[25px]', 'g1'], ['w-[24px]', 'g2'], ['w-[16px]', 'g3']]}
            bottom={[['w-[25px]', 'g4'], ['w-[24px]', 'g5'], ['w-[16px]', 'g6']]}
          />
          <Rows
            className="pl-[8px] mt-[1px] !pt-[1px]"
            top={[['w-[25px]', 'd1'], ['w-[24px]', 'd2'], ['w-[26px]', 'd3'], ['w-[22px]', 'd4'], ['w-[6px]', 'dd']]}
            bottom={[['w-[25px]', 'd5'], ['w-[24px]', 'd6'], ['w-[26px]', 'd7'], ['w-[16px]', 'd8']]}
          />
        </div>
        <Label>Add Geometry</Label>
      </div>
      {/* Style */}
      <div className="w-[270px] flex-none border-r border-[#d9dbde]">
        <div className="flex h-[50px] text-[12px] font-semibold text-[#444]">
          <div className="w-[157px] pl-[4px] border-r-2 border-[#d3d4d6]">
            <div className="flex items-center gap-[3px] h-[19px] pt-[1px]"><Ic n="pencilLine" /><span>Line</span></div>
            <div className="flex gap-[6px]"><Sel a="weightL" /><Sel a="dash" /><Sel a="ball" /></div>
            <div className="flex gap-[6px] mt-[1px]"><Sel a="startL" /><Sel a="endL" /></div>
          </div>
          <div className="w-[58px] pl-[6px] border-r-2 border-[#d3d4d6]">
            <div className="flex items-center gap-[4px] h-[19px]"><Ic n="bucket" /><span>Fill</span></div>
            <Sel a="ball" wide={false} />
          </div>
          <div className="pl-[6px]">
            <div className="flex items-center gap-[2px] h-[19px]">
              <span className="text-[17px] leading-none font-['Liberation_Serif',serif] font-normal text-[#b03050]">A<sup className="text-[11px] text-[#3a5fa8]">a</sup></span>
              <span>Text</span>
            </div>
            <Sel a="ball" wide={false} />
            <Sel a="sizeA" wide={false} className="mt-[1px]" />
          </div>
        </div>
        <div className="flex">
          <Label className="w-[262px]">Style</Label>
          <svg width="6" height="6" viewBox="0 0 6 6" className="mt-[6px]"><path d="M0 .5H5.5V6M1 5.5H4V2.5Z" stroke="#666" fill="none" strokeWidth=".8" /></svg>
        </div>
      </div>
      {/* width & angle */}
      <div className="w-[107px] flex-none border-r border-[#d9dbde] flex pl-[4px]">
        <div className="flex flex-col gap-[2px]">
          <div className="flex">
            <div className="w-[24px] h-[21px] flex items-center justify-center bg-white border border-[#9a9a9a]"><Ic n="lockI" /></div>
            <Field className="w-[48px] h-[21px] bg-white border-[#555]">0</Field>
          </div>
          <div className="flex">
            <div className="w-[24px] h-[21px] flex items-center justify-center bg-white border border-[#9a9a9a]"><Ic n="lockA" /></div>
            <Field className="w-[48px] h-[21px] bg-white border-[#555]">0</Field>
          </div>
          <div className="flex">
            <div className="w-[24px] h-[20px] flex items-center justify-center"><Ic n="listBox" /></div>
            <Field className="w-[48px] bg-[#f0f0f0] border-[#ddd]" />
          </div>
        </div>
        <div className="ml-[8px] mt-[15px]"><Ic n="pencil" /></div>
      </div>
      {/* Construction Aids */}
      <div className="w-[267px] flex-none border-r border-[#d9dbde] flex">
        <div className="w-[152px] flex-none">
          <div className="h-[50px] pt-[3px] pl-[6px]">
            <div className="flex items-center h-[20px]">
              <div className="w-[19px]"><Ic n="arrH" /></div>
              <Field className="w-[51px] bg-[#f0f0f0] border-[#ddd]" />
              <div className="w-[19px] ml-[6px]"><Ic n="arrHH" /></div>
              <Field className="w-[51px] bg-[#f0f0f0] border-[#ddd]" />
            </div>
            <div className="flex items-center h-[20px] mt-[5px]">
              <div className="w-[19px]"><Ic n="arrV" /></div>
              <Field className="w-[51px] bg-[#f0f0f0] border-[#ddd]" />
              <div className="w-[19px] ml-[6px]"><Ic n="arrVV" /></div>
              <Field className="w-[51px] bg-[#f0f0f0] border-[#ddd]" />
            </div>
          </div>
          <Label className="w-[158px]">Construction Aids</Label>
        </div>
        <svg width="20" height="46" viewBox="0 0 20 46" className="flex-none mt-[3px]">
          <path d="M0 4H12V14M12 32V42H0" stroke="#a8a8a8" strokeWidth="3" fill="none" />
          <rect x="5" y="14" width="14" height="18" rx="3" fill="#fff" stroke="#c8c8c8" />
          <rect x="8.5" y="21" width="7" height="7" fill="#e9b93c" stroke="#9a7420" strokeWidth=".6" />
          <path d="M10 21V19C10 17 14 17 14 19V21" stroke="#9a7420" fill="none" />
        </svg>
        <div className="ml-[6px] mt-[3px] w-[45px] flex-none flex flex-col items-center">
          <svg width="45" height="30" viewBox="0 0 45 30" className="block">
            <path d="M1 30C1 10 12 1 22.5 1C33 1 44 10 44 30" fill="#eef0f2" stroke="#aaa" />
            <path d="M1 29H6M39 29H44M8 12L11 15M37 12L34 15" stroke="#888" />
            <circle cx="22.5" cy="6" r="3.5" fill="#c2c5c9" stroke="#777" />
          </svg>
          <div className="w-[45px] h-[18px] -mt-[1px] bg-white border-2 border-[#bbb] text-center text-[11px] font-bold leading-[14px] text-[#222]">0.0</div>
        </div>
        <div className="ml-[5px] mt-[16px] w-[33px] h-[34px] grid grid-cols-3 grid-rows-3 gap-px bg-[#c8cacc] border border-[#c0c2c4] rounded-[2px] flex-none">
          {Array.from({ length: 9 }, (_, i) => <span key={i} className="bg-[#ecedef]" />)}
        </div>
      </div>
    </div>
  );
}

export default function App() {
  return (
    <div className="h-[1040px] w-full flex flex-col overflow-hidden bg-white text-[12px] text-[#1a1a1a] font-['Open_Sans','Noto_Sans',sans-serif]">
      {/* title bar */}
      <div className="h-[23px] flex-none flex items-center bg-white">
        <span className="ml-[2px] w-[16px] h-[15px] rounded-[3px] bg-[#1c4a72] text-white text-[10px] font-bold leading-[15px] text-center font-['Liberation_Sans',sans-serif]">BT</span>
        <span className="ml-[5px] text-[12px]">BeamTool 9</span>
        <div className="ml-auto flex items-center">
          <svg width="12" height="12" viewBox="0 0 12 12" className="mr-[34px]"><path d="M1 6.5H11" stroke="#222" /></svg>
          <svg width="12" height="12" viewBox="0 0 12 12" className="mr-[33px]"><path d="M1.5 3.5H8.5V10.5H1.5ZM3.5 3.5V1.5H10.5V8.5H8.5" stroke="#222" fill="none" /></svg>
          <svg width="12" height="12" viewBox="0 0 12 12" className="mr-[19px]"><path d="M1 1L11 11M11 1L1 11" stroke="#222" /></svg>
        </div>
      </div>
      {/* menu */}
      <div className="h-[25px] flex-none flex items-center bg-[#e9ecf0] pt-[2px] font-semibold text-[12.5px] text-[#222]">
        <span className="ml-[12px] w-[39px]">File</span>
        <span className="w-[43px]">Edit</span>
        <span className="w-[75px]">Drawings</span>
        <span>Tools</span>
        <span className="ml-auto mr-[14px]">Help</span>
      </div>
      <div className="h-[2px] flex-none bg-[#8b92a0]" />
      {/* toolbar */}
      <div className="h-[28px] flex-none flex items-center bg-[#f6f8fa] border-b border-[#9aa0aa] pl-[7px]">
        <Strip items={LEFT_BAR} />
        <div className="ml-auto flex items-center"><Strip items={RIGHT_BAR} /></div>
      </div>
      {/* probe strip */}
      <div className="h-[51px] flex-none bg-[#dcdcdc] pl-[2px] pt-[2px]">
        <div className="w-[255px] h-[47px] rounded-[4px] border border-[#1a1a2a] bg-[#d1d4f6] overflow-hidden">
          <div className="h-[21px] flex items-center bg-gradient-to-b from-[#c9cbee] to-[#bcbfe6] pl-[2px]">
            <span className="w-[17px] h-[17px] rounded-[3px] bg-[#6a6ccf] text-white text-[11px] font-bold text-center leading-[17px]">PA</span>
            <span className="ml-[4px] font-bold text-[12px] text-black">PA Probe</span>
          </div>
          <div className="flex items-center h-[22px] pl-[3px]">
            <Ic n="pLen" />
            <Pill value="-18.00" className="w-[61px]" />
            <div className="ml-[5px]"><Ic n="pAng" /></div>
            <Pill value="0.00" className="w-[61px] ml-[1px]" />
            <div className="ml-[7px]"><Ic n="pOff" /></div>
            <Pill value="0.00" className="w-[62px] ml-[1px]" />
          </div>
        </div>
      </div>
      <div className="h-[16px] flex-none bg-[#c9c9c9]" />
      <Canvas />
      {/* status line */}
      <div className="h-[18px] flex-none bg-white border-t border-[#777] pl-[2px] leading-[15px]">Ready :</div>
      <Ribbon />
      {/* footer */}
      <div className="h-[27px] flex-none flex items-center bg-gradient-to-b from-[#f6f6f6] to-[#dadada] border-t border-[#a8a8a8]">
        <div className="ml-auto flex items-center">
          <Ic n="axes" />
          <span className="ml-[22px] w-[101px] text-[12.5px]">59.55 , 61.17</span>
          <span className="mr-[14px] w-[27px] h-[11px] rounded-full bg-[#9a9aea] text-white text-[10px] font-bold leading-[10px] text-center">mm</span>
        </div>
      </div>
    </div>
  );
}
